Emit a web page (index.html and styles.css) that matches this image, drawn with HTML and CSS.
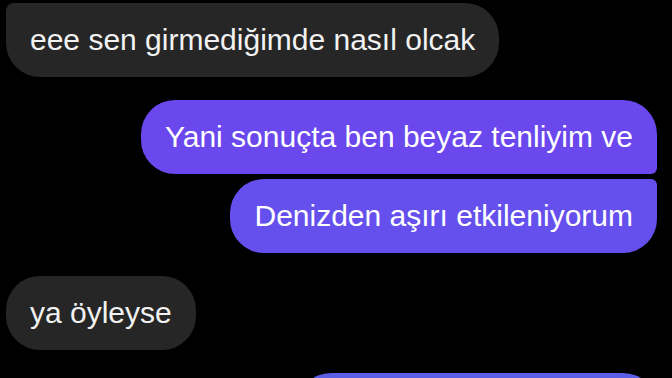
FILE: index.html
```html
<!DOCTYPE html>
<html lang="tr">
<head>
<meta charset="utf-8">
<title>Sohbet</title>
<link rel="stylesheet" href="styles.css">
</head>
<body>
<main class="thread">
  <div class="row in">
    <div class="bubble gray first-cont">eee sen girmediğimde nasıl olcak</div>
  </div>
  <div class="group out">
    <div class="row out"><div class="bubble purple p1 top">Yani sonuçta ben beyaz tenliyim ve</div></div>
    <div class="row out"><div class="bubble purple p2 bottom">Denizden aşırı etkileniyorum</div></div>
  </div>
  <div class="row in">
    <div class="bubble gray single">ya öyleyse</div>
  </div>
  <div class="row out">
    <div class="bubble purple p3 single partial">&nbsp;</div>
  </div>
</main>
</body>
</html>
```
FILE: styles.css
```css
html, body {
  margin: 0;
  padding: 0;
  background: #000;
  height: 100%;
  overflow: hidden;
}
.thread {
  display: flex;
  flex-direction: column;
  gap: 23px;
  padding: 3px 15px 0 6px;
  font-family: "Liberation Sans", Arial, sans-serif;
}
.group {
  display: flex;
  flex-direction: column;
  gap: 5px;
}
.row {
  display: flex;
}
.row.in { justify-content: flex-start; }
.row.out { justify-content: flex-end; }
.bubble {
  font-size: 30px;
  line-height: 34px;
  padding: 20px 24px;
  color: #fff;
  border-radius: 34px;
  white-space: nowrap;
}
.gray { background: #262626; color: #f2f2f2; }
.purple { color: #fff; }
.p1 { background: #6a48ee; }
.p2 { background: #6550ee; }
.p3 { background: #5b5fe8; }
.first-cont { border-top-left-radius: 8px; }
.top { border-bottom-right-radius: 6px; }
.bottom { border-top-right-radius: 6px; }
.partial { width: 312px; }
```
